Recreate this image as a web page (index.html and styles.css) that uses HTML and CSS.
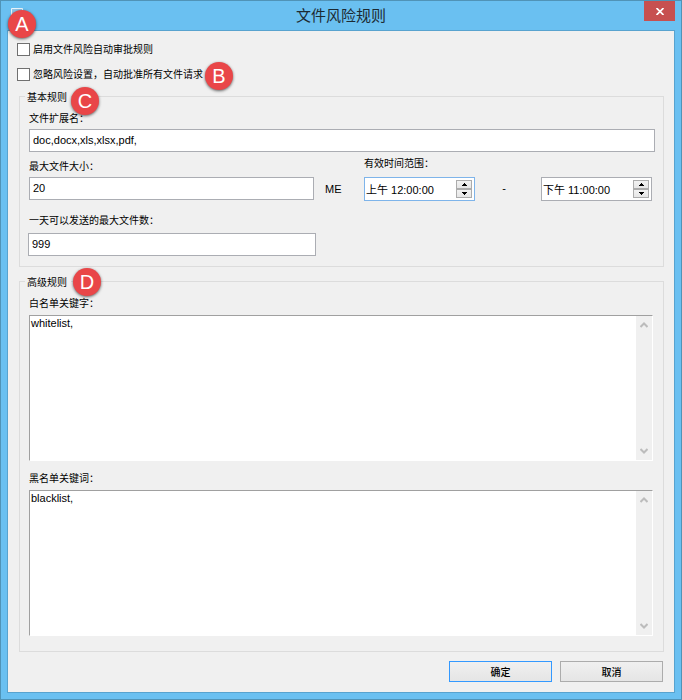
FILE: index.html
```html
<!DOCTYPE html>
<html lang="zh-CN">
<head>
<meta charset="utf-8">
<title>文件风险规则</title>
<link rel="stylesheet" href="styles.css">
</head>
<body>
<form class="window">
  <header class="titlebar">
    <svg class="app-icon" width="12" height="12" viewBox="0 0 12 12"><path d="M.5 11.500V.5H11.500V11.500Z" fill="#8fc4e6" stroke="#e8f3fa"/></svg>
    <span class="badge badge-a">A</span>
    <h1 class="title">文件风险规则</h1>
    <button class="close" type="button" aria-label="关闭"><svg width="8" height="7" viewBox="0 0 8 7"><path d="M.5 0L7.500 7M7.500 0L.5 7" stroke="#fff" stroke-width="1.700"/></svg></button>
  </header>
  <main class="client">
    <label class="check"><input type="checkbox">启用文件风险自动审批规则</label>
    <label class="check"><input type="checkbox">忽略风险设置，自动批准所有文件请求<span class="badge badge-b">B</span></label>

    <fieldset class="group basic">
      <legend>基本规则<span class="badge badge-c">C</span></legend>
      <div class="field">
        <label for="ext">文件扩展名：</label>
        <input class="box" id="ext" type="text" value="doc,docx,xls,xlsx,pdf,">
      </div>
      <div class="row">
        <div class="field size">
          <label for="size">最大文件大小：</label>
          <input class="box" id="size" type="text" value="20">
        </div>
        <span class="unit">ME</span>
        <div class="field range">
          <label for="from">有效时间范围：</label>
          <div class="times">
            <div class="time active">
              <input id="from" type="text" value="上午 12:00:00">
              <div class="spin">
                <button type="button" aria-label="增加"><svg width="5" height="3" viewBox="0 0 5 3"><path d="M0 3V2H1V1H2V0H3V1H4V2H5V3Z"/></svg></button>
                <button type="button" aria-label="减少"><svg width="5" height="3" viewBox="0 0 5 3"><path d="M0 0V1H1V2H2V3H3V2H4V1H5V0Z"/></svg></button>
              </div>
            </div>
            <span class="dash">-</span>
            <div class="time">
              <input type="text" aria-label="结束时间" value="下午 11:00:00">
              <div class="spin">
                <button type="button" aria-label="增加"><svg width="5" height="3" viewBox="0 0 5 3"><path d="M0 3V2H1V1H2V0H3V1H4V2H5V3Z"/></svg></button>
                <button type="button" aria-label="减少"><svg width="5" height="3" viewBox="0 0 5 3"><path d="M0 0V1H1V2H2V3H3V2H4V1H5V0Z"/></svg></button>
              </div>
            </div>
          </div>
        </div>
      </div>
      <div class="field count">
        <label for="count">一天可以发送的最大文件数：</label>
        <input class="box" id="count" type="text" value="999">
      </div>
    </fieldset>

    <fieldset class="group advanced">
      <legend>高级规则<span class="badge badge-d">D</span></legend>
      <div class="field">
        <label for="white">白名单关键字：</label>
        <div class="memo">
          <textarea id="white">whitelist,</textarea>
          <div class="scroll">
            <button type="button" aria-label="向上滚动"><svg width="8" height="6" viewBox="0 0 8 6"><path d="M.5 5L4 1.500L7.500 5"/></svg></button>
            <button type="button" aria-label="向下滚动"><svg width="8" height="6" viewBox="0 0 8 6"><path d="M.5 1L4 4.500L7.500 1"/></svg></button>
          </div>
        </div>
      </div>
      <div class="field">
        <label for="black">黑名单关键词：</label>
        <div class="memo">
          <textarea id="black">blacklist,</textarea>
          <div class="scroll">
            <button type="button" aria-label="向上滚动"><svg width="8" height="6" viewBox="0 0 8 6"><path d="M.5 5L4 1.500L7.500 5"/></svg></button>
            <button type="button" aria-label="向下滚动"><svg width="8" height="6" viewBox="0 0 8 6"><path d="M.5 1L4 4.500L7.500 1"/></svg></button>
          </div>
        </div>
      </div>
    </fieldset>

    <footer class="actions">
      <button class="ok" type="submit">确定</button>
      <button type="button">取消</button>
    </footer>
  </main>
</form>
</body>
</html>
```
FILE: styles.css
```css
* {
  box-sizing: border-box;
}

body {
  margin: 0;
  color: #000;
  font: 10px/16px "Liberation Sans", "Noto Sans CJK SC", sans-serif;
}

input,
textarea,
button {
  margin: 0;
  padding: 0;
  border: 0;
  border-radius: 0;
  outline: 0;
  color: inherit;
  font-family: inherit;
}

.window {
  display: flex;
  flex-direction: column;
  min-height: 100vh;
  padding: 0 6px 6px;
  border: 1px solid #5093b7;
  background: #6ac0f1;
}

.titlebar {
  position: relative;
  display: flex;
  align-items: flex-start;
  height: 29px;
}

.app-icon {
  margin: 7px 0 0 4px;
}

.title {
  flex: 1;
  margin: 0;
  padding-left: 15px;
  color: #1c2a33;
  font-size: 15px;
  font-weight: 400;
  line-height: 29px;
  text-align: center;
}

.close {
  display: flex;
  align-items: center;
  justify-content: center;
  width: 31px;
  height: 20px;
  background: #c75050;
}

.client {
  display: flex;
  flex: 1;
  flex-direction: column;
  padding: 10px 10px 10px 11px;
  border: 1px solid #58a3cf;
  background: #f0f0f0;
}

.check {
  position: relative;
  display: flex;
  align-items: center;
  align-self: flex-start;
  gap: 3px;
  height: 17px;
  margin: 0 0 8px -2px;
  line-height: 18px;
}

.check input {
  appearance: none;
  width: 13px;
  height: 13px;
  border: 1px solid #707070;
  background: #fff;
}

.badge {
  position: absolute;
  display: flex;
  align-items: center;
  justify-content: center;
  width: 28px;
  height: 28px;
  border-radius: 50%;
  background: #e94648;
  box-shadow: 0 1px 3px rgb(0 0 0 / 60%);
  color: #fff;
  font-size: 20px;
  line-height: 28px;
}

.badge-a {
  top: 9px;
  left: 1px;
}

.badge-b {
  top: -4px;
  left: 188px;
}

.badge-c {
  top: 1px;
  left: 46px;
}

.badge-d {
  top: -3px;
  left: 48px;
}

.group {
  min-width: 0;
  margin: 0;
  border: 1px solid #dcdcdc;
}

.basic {
  margin-top: -5px;
  padding: 5px 8px 10px 9px;
}

.advanced {
  display: flex;
  flex: 1;
  flex-direction: column;
  gap: 10px;
  margin-top: 4px;
  padding: 5px 10px 13px 9px;
}

legend {
  position: relative;
  margin-left: -4px;
  padding: 4px 4px 0 2px;
}

.field {
  display: flex;
  flex-direction: column;
  gap: 2px;
}

.box {
  width: 100%;
  height: 23px;
  padding: 0 3px 2px;
  border: 1px solid #abadb3;
  background: #fff;
  font-size: 11px;
}

.row {
  display: flex;
  align-items: flex-start;
  margin: 3px 0 12px;
}

.size {
  flex: 285;
  padding-top: 4px;
}

.unit {
  width: 50px;
  padding: 26px 0 0 11px;
  font-size: 11px;
}

.range {
  flex: 288;
  gap: 5px;
  margin-right: 3px;
  padding-top: 1px;
}

.times {
  display: flex;
}

.time {
  display: flex;
  width: 111px;
  height: 24px;
  padding: 2px 2px 2px 1px;
  border: 1px solid #abadb3;
  background: #fff;
}

.time.active {
  border-color: #7eb4ea;
}

.time input {
  flex: 1;
  min-width: 0;
  background: transparent;
  font-size: 11px;
}

.spin {
  display: flex;
  flex-direction: column;
  width: 16px;
}

.spin button {
  display: flex;
  flex: 1;
  align-items: center;
  justify-content: center;
  border: 1px solid #acacac;
  background: linear-gradient(#f2f2f2, #e6e6e6);
}

.dash {
  flex: 1;
  padding-right: 8px;
  font-size: 11px;
  line-height: 22px;
  text-align: center;
}

.count {
  gap: 4px;
}

.count .box {
  width: 46%;
  margin-left: -1px;
}

.advanced .field {
  flex: 1;
  gap: 3px;
}

.memo {
  display: flex;
  flex: 1;
  min-height: 146px;
  border: 1px solid;
  border-color: #a0a0a0 #fff #fff #a0a0a0;
  background: #fff;
}

.memo textarea {
  flex: 1;
  min-width: 0;
  padding: 0 1px;
  resize: none;
  background: #fff;
  font-size: 11px;
  line-height: 14px;
}

.scroll {
  display: flex;
  flex-direction: column;
  justify-content: space-between;
  width: 16px;
  background: #f0f0f0;
}

.scroll button {
  display: flex;
  align-items: center;
  justify-content: center;
  height: 18px;
  background: transparent;
}

.scroll path {
  fill: none;
  stroke: #bcbcbc;
  stroke-width: 2;
}

.actions {
  display: flex;
  justify-content: flex-end;
  gap: 8px;
  margin: 9px 1px 0 0;
}

.actions button {
  width: 103px;
  height: 21px;
  border: 1px solid #acacac;
  background: linear-gradient(#f0f0f0, #e5e5e5);
  font-size: 10px;
  font-weight: 500;
}

.actions .ok {
  border-color: #3399ff;
}
```
